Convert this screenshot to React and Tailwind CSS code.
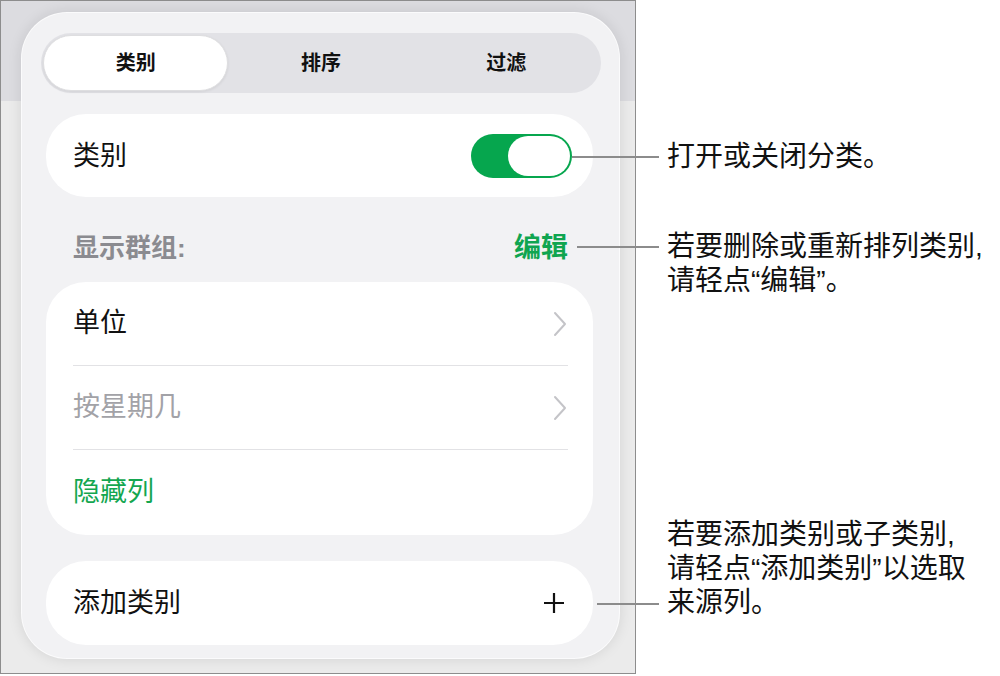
import React from "react";

const cjk = { fontFamily: '"Liberation Sans", "Noto Sans CJK SC", sans-serif' };

function Chevron() {
  return (
    <svg width="14" height="26" viewBox="0 0 14 26" fill="none">
      <path d="M2 2l10 11L2 24" stroke="#c4c4c8" strokeWidth="2" strokeLinecap="round" strokeLinejoin="round" />
    </svg>
  );
}

function Plus() {
  return (
    <svg width="22" height="22" viewBox="0 0 22 22" fill="none">
      <path d="M11 1v20M1 11h20" stroke="#111" strokeWidth="2.2" />
    </svg>
  );
}

function Segments() {
  const tabs = ["类别", "排序", "过滤"];
  return (
    <div className="mx-[19px] h-[60px] w-[560px] rounded-full bg-[#e2e2e6] p-[2px] grid grid-cols-3">
      {tabs.map((t, i) => (
        <div
          key={t}
          className={
            i === 0
              ? "flex items-center justify-center rounded-full bg-white border border-[#dedee0] shadow-[0_1px_3px_rgba(0,0,0,0.08)] text-[20px] font-semibold text-[#111]"
              : "flex items-center justify-center text-[20px] font-semibold text-[#111]"
          }
        >
          {t}
        </div>
      ))}
    </div>
  );
}

function Toggle() {
  return (
    <div className="w-[101px] h-[44px] rounded-full bg-[#06a64e] p-[2px] flex justify-end">
      <div className="w-[62px] h-[40px] rounded-full bg-white" />
    </div>
  );
}

function Popover() {
  return (
    <div className="mt-[11px] ml-[20px] w-[599px] h-[647px] rounded-[46px] bg-[#f2f2f4] border border-white/70 shadow-[0_0_14px_rgba(0,0,0,0.10)] pt-[20px]">
      <Segments />

      <div className="mt-[21px] ml-[24px] w-[547px] h-[83px] rounded-[40px] bg-white pl-[27px] pr-[21px] flex items-center justify-between">
        <span className="text-[27px] leading-[34px] text-[#111]">类别</span>
        <Toggle />
      </div>

      <div className="ml-[24px] w-[547px] h-[85px] pl-[27px] pr-[25px] pb-[19px] flex items-end justify-between">
        <span className="text-[26px] leading-[30px] font-semibold text-[#8b8b90]">显示群组:</span>
        <span className="text-[27px] leading-[30px] font-semibold text-[#10a550]">编辑</span>
      </div>

      <div className="ml-[24px] w-[547px] h-[253px] rounded-[40px] bg-white flex flex-col">
        <div className="h-[83px] pl-[27px] pr-[26px] flex items-center justify-between">
          <span className="text-[27px] text-[#111]">单位</span>
          <Chevron />
        </div>
        <div className="ml-[27px] mr-[25px] h-px bg-[#e2e2e5]" />
        <div className="h-[83px] pl-[27px] pr-[26px] flex items-center justify-between">
          <span className="text-[27px] text-[#a2a2a7]">按星期几</span>
          <Chevron />
        </div>
        <div className="ml-[27px] mr-[25px] h-px bg-[#e2e2e5]" />
        <div className="h-[85px] pl-[27px] flex items-center">
          <span className="text-[27px] text-[#14a650]">隐藏列</span>
        </div>
      </div>

      <div className="mt-[26px] ml-[24px] w-[547px] h-[84px] rounded-[40px] bg-white pl-[27px] pr-[28px] flex items-center justify-between">
        <span className="text-[27px] text-[#111]">添加类别</span>
        <Plus />
      </div>
    </div>
  );
}

export default function App() {
  return (
    <div className="relative w-[1000px] h-[676px] bg-white flex" style={cjk}>
      <div className="shrink-0 w-[636px] h-[674px] border border-[#8d8d8d] bg-[linear-gradient(to_bottom,#dcdce0_0px,#dcdce0_100px,#ebebeb_100px)]">
        <Popover />
      </div>

      <div className="ml-[31px] pt-[140px] text-[28px] leading-[34px] text-[#111] whitespace-nowrap">
        <p>打开或关闭分类。</p>
        <p className="mt-[56px]">
          若要删除或重新排列类别,
          <br />
          请轻点“编辑”。
        </p>
        <p className="mt-[220px]">
          若要添加类别或子类别,
          <br />
          请轻点“添加类别”以选取
          <br />
          来源列。
        </p>
      </div>

      {/* callout lines */}
      <div className="absolute left-[572px] top-[156px] w-[87px] h-[2px] bg-[#8c8c8c]" />
      <div className="absolute left-[577px] top-[246px] w-[82px] h-[2px] bg-[#8c8c8c]" />
      <div className="absolute left-[597px] top-[603px] w-[62px] h-[2px] bg-[#8c8c8c]" />
    </div>
  );
}
